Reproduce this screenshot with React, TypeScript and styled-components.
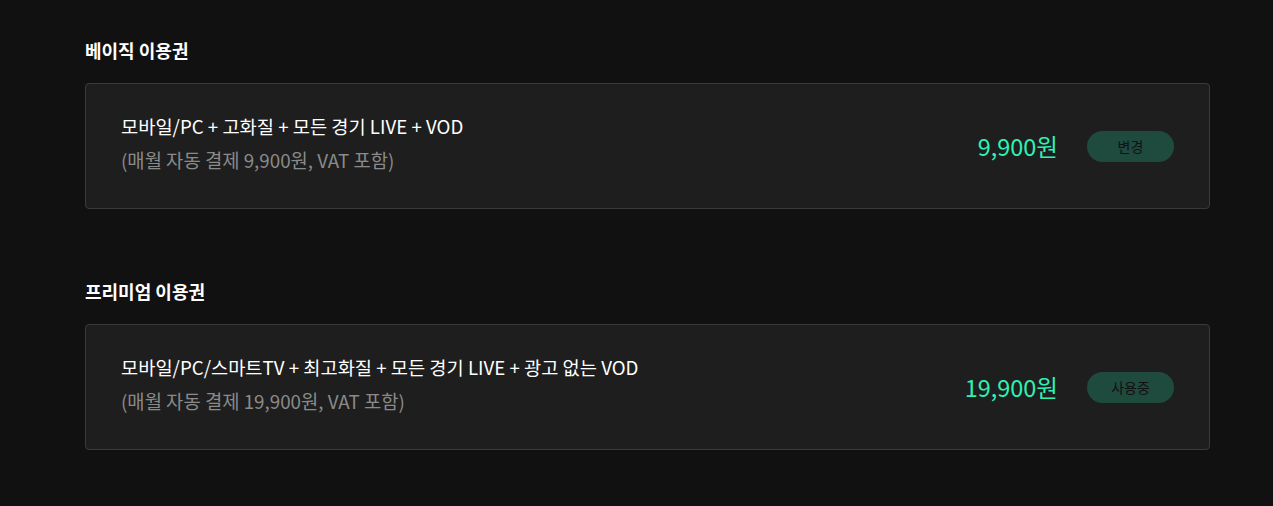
import styled, { createGlobalStyle } from 'styled-components';

const GlobalStyle = createGlobalStyle`
  html, body {
    margin: 0;
    padding: 0;
    background-color: #111111;
  }
  body {
    font-family: "Noto Sans CJK KR", "Noto Sans", sans-serif;
    color: #ffffff;
  }
`;

const Page = styled.main`
  padding: 39px 63px 40px 85px;
  display: flex;
  flex-direction: column;
  gap: 71px;
`;

const Section = styled.section`
  display: flex;
  flex-direction: column;
  gap: 21px;
`;

const SectionTitle = styled.h3`
  margin: 0;
  font-size: 18px;
  line-height: 23px;
  font-weight: 700;
  color: #ffffff;
`;

const Card = styled.div`
  box-sizing: border-box;
  height: 126px;
  display: flex;
  align-items: center;
  justify-content: space-between;
  padding: 0 35px;
  background-color: #1e1e1e;
  border: 1px solid #3a3a3a;
  border-radius: 4px;
`;

const Info = styled.div`
  display: flex;
  flex-direction: column;
  gap: 8px;
  padding-bottom: 6px;
`;

const Feature = styled.p`
  margin: 0;
  font-size: 18.7px;
  line-height: 26px;
  color: #ffffff;
`;

const Billing = styled.p`
  margin: 0;
  font-size: 18.8px;
  line-height: 26px;
  color: #8a8a8a;
`;

const Side = styled.div`
  display: flex;
  align-items: center;
  gap: 29px;
`;

const Price = styled.span`
  font-size: 23.5px;
  line-height: 30px;
  color: #2ef2b4;
`;

const PlanButton = styled.button`
  width: 87px;
  height: 31px;
  border: none;
  border-radius: 16px;
  background-color: #1f4a3e;
  color: #111111;
  font-family: inherit;
  font-size: 14px;
  cursor: pointer;
`;

const plans = [
  {
    title: '베이직 이용권',
    feature: '모바일/PC + 고화질 + 모든 경기 LIVE + VOD',
    billing: '(매월 자동 결제 9,900원, VAT 포함)',
    price: '9,900원',
    action: '변경',
  },
  {
    title: '프리미엄 이용권',
    feature: '모바일/PC/스마트TV + 최고화질 + 모든 경기 LIVE + 광고 없는 VOD',
    billing: '(매월 자동 결제 19,900원, VAT 포함)',
    price: '19,900원',
    action: '사용중',
  },
];

export default function App() {
  return (
    <>
      <GlobalStyle />
      <Page>
        {plans.map((plan) => (
          <Section key={plan.title}>
            <SectionTitle>{plan.title}</SectionTitle>
            <Card>
              <Info>
                <Feature>{plan.feature}</Feature>
                <Billing>{plan.billing}</Billing>
              </Info>
              <Side>
                <Price>{plan.price}</Price>
                <PlanButton>{plan.action}</PlanButton>
              </Side>
            </Card>
          </Section>
        ))}
      </Page>
    </>
  );
}
